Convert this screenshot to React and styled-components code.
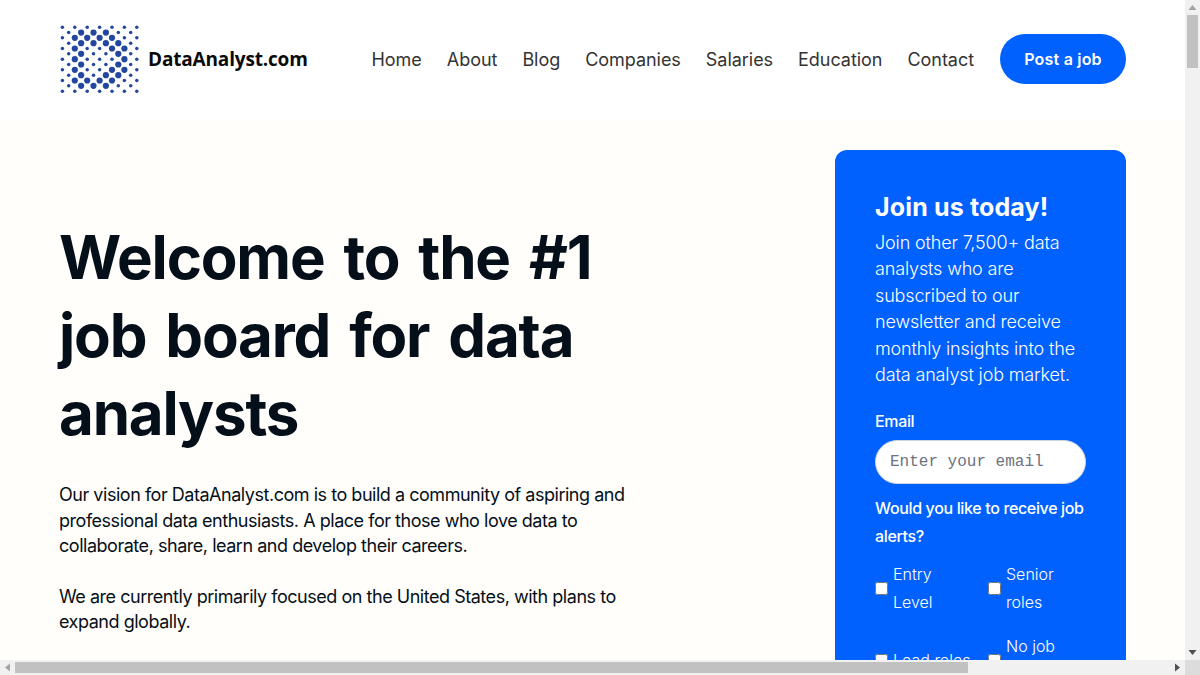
import styled, { createGlobalStyle } from 'styled-components';

const GlobalStyle = createGlobalStyle`
  html, body {
    margin: 0;
    padding: 0;
    overflow: hidden;
    background: #fffefb;
  }
  body {
    font-family: Inter, "Noto Sans", sans-serif;
    color: #050f19;
  }
  * {
    box-sizing: border-box;
  }
`;

// window: page area plus the two browser scrollbars
const Frame = styled.div`
  display: grid;
  grid-template-columns: 1185px 15px;
  grid-template-rows: 660px 15px;
  width: 1200px;
  height: 675px;
  overflow: hidden;
`;

const Viewport = styled.main`
  overflow: hidden;
`;

const ScrollY = styled.div`
  display: flex;
  flex-direction: column;
  align-items: center;
  justify-content: space-between;
  background: #f1f1f1;
`;

const ScrollX = styled.div`
  display: flex;
  align-items: center;
  justify-content: space-between;
  background: #f1f1f1;
`;

const TrackStart = styled.div`
  display: flex;
  flex-direction: ${(p) => (p.$vertical ? 'column' : 'row')};
  align-items: center;
`;

const ThumbY = styled.div`
  width: 11px;
  height: 53px;
  background: #c1c1c1;
`;

const ThumbX = styled.div`
  width: 953px;
  height: 11px;
  background: #c1c1c1;
`;

const ArrowBox = styled.span`
  display: flex;
  flex: none;
  align-items: center;
  justify-content: center;
  width: 15px;
  height: 15px;
`;

const Corner = styled.div`
  background: #dcdcdc;
`;

const Header = styled.header`
  display: flex;
  align-items: center;
  height: 121px;
  padding: 0 59px 4px 60px;
  background: #fff;
`;

const Logo = styled.a`
  display: flex;
  align-items: center;
  gap: 8px;
  margin-right: auto;
`;

const LogoText = styled.span`
  font-family: "Open Sans", sans-serif;
  font-size: 19px;
  font-weight: 700;
  color: #0a0a0a;
  letter-spacing: -0.17px;
`;

const Nav = styled.nav`
  display: flex;
  align-items: center;
  gap: 25px;
`;

const NavLink = styled.a`
  margin-top: 2px;
  font-size: 18px;
  letter-spacing: -0.04px;
  color: #333;
`;

const PostButton = styled.a`
  display: flex;
  align-items: center;
  justify-content: center;
  width: 126px;
  height: 50px;
  margin-left: 1px;
  border-radius: 25px;
  background: #0061ff;
  color: #fff;
  font-size: 16px;
  font-weight: 600;
  letter-spacing: 0.2px;
`;

const Hero = styled.section`
  display: flex;
  justify-content: space-between;
  align-items: flex-start;
  padding: 29px 59px 0 59px;
`;

const Intro = styled.div`
  width: 580px;
  padding-top: 68px;
`;

const Title = styled.h1`
  margin: 0 0 30px;
  font-size: 60px;
  font-weight: 700;
  line-height: 78px;
  letter-spacing: -1.2px;
  word-spacing: 6px;
`;

const Lead = styled.p`
  width: 570px;
  margin: 0 0 25px;
  font-size: 18px;
  line-height: 25.6px;
  letter-spacing: -0.47px;
`;

const SignupCard = styled.aside`
  width: 291px;
  padding: 36px 40px;
  border-radius: 12px;
  background: #0061ff;
  color: #fff;
`;

const CardTitle = styled.h2`
  margin: 0 0 2px;
  font-size: 25px;
  font-weight: 700;
  line-height: 42px;
  letter-spacing: 0.15px;
`;

const CardText = styled.p`
  margin: 0 0 19px;
  font-size: 18px;
  font-weight: 300;
  line-height: 26.4px;
  letter-spacing: -0.15px;
`;

const FieldLabel = styled.label`
  display: block;
  margin-bottom: 5px;
  font-size: 16px;
  font-weight: 500;
  line-height: 28px;
  letter-spacing: -0.35px;
`;

const EmailInput = styled.input`
  display: block;
  width: 100%;
  height: 44px;
  margin-bottom: 10px;
  padding: 0 14px;
  border: 1px solid #cbd5e1;
  border-radius: 22px;
  background: #fff;
  font-family: "Liberation Mono", monospace;
  font-size: 16px;
  &::placeholder {
    color: #6b7280;
  }
`;

const AlertOptions = styled.div`
  display: grid;
  grid-template-columns: 113px 98px;
  row-gap: 16px;
  margin-top: 10px;
`;

const Option = styled.label`
  display: flex;
  align-items: center;
  gap: 5px;
  padding-right: 17px;
  font-size: 16px;
  font-weight: 300;
  line-height: 28px;
`;

const Box = styled.input`
  flex: none;
  width: 13px;
  height: 13px;
  margin: 0;
`;

// halftone grid of the logo: s = small dot, B = big dot, row by row
const dotRows = [
  'sssssss',
  'sBBBss',
  'sBBBBss',
  'sBBBBs',
  'sBssBBs',
  'sBssBs',
  'sBsssBs',
  'sBssBs',
  'sBssBBs',
  'sBsBBs',
  'sBBBBss',
  'sBBBss',
  'sssssss',
];

const LogoMark = () => (
  <svg width="80" height="70" viewBox="0 0 80 70">
    {dotRows.map((row, r) =>
      [...row].map((size, c) => (
        <circle
          key={`${r}-${c}`}
          cx={(row.length === 7 ? 2.4 : 8.7) + c * 12.4}
          cy={3.2 + r * 5.33}
          r={size === 'B' ? 3.1 : 1.75}
          fill="#23479f"
        />
      ))
    )}
  </svg>
);

const arrowPoints = {
  up: '7.5,5 3.5,10 11.5,10',
  down: '7.5,10 3.5,5 11.5,5',
  left: '5,7.5 10,3.5 10,11.5',
  right: '10,7.5 5,3.5 5,11.5',
};

const Arrow = ({ dir, muted }) => (
  <ArrowBox>
    <svg width="15" height="15" viewBox="0 0 15 15">
      <polygon points={arrowPoints[dir]} fill={muted ? '#a3a3a3' : '#505050'} />
    </svg>
  </ArrowBox>
);

const links = ['Home', 'About', 'Blog', 'Companies', 'Salaries', 'Education', 'Contact'];

const App = () => (
  <Frame>
    <GlobalStyle />
    <Viewport>
      <Header>
        <Logo>
          <LogoMark />
          <LogoText>DataAnalyst.com</LogoText>
        </Logo>
        <Nav>
          {links.map((link) => (
            <NavLink key={link}>{link}</NavLink>
          ))}
          <PostButton>Post a job</PostButton>
        </Nav>
      </Header>
      <Hero>
        <Intro>
          <Title>Welcome to the #1 job board for data analysts</Title>
          <Lead>
            Our vision for DataAnalyst.com is to build a community of aspiring and professional data
            enthusiasts. A place for those who love data to collaborate, share, learn and develop
            their careers.
          </Lead>
          <Lead>
            We are currently primarily focused on the United States, with plans to expand globally.
          </Lead>
        </Intro>
        <SignupCard>
          <CardTitle>Join us today!</CardTitle>
          <CardText>
            Join other 7,500+ data analysts who are subscribed to our newsletter and receive monthly
            insights into the data analyst job market.
          </CardText>
          <FieldLabel>Email</FieldLabel>
          <EmailInput placeholder="Enter your email" />
          <FieldLabel>Would you like to receive job alerts?</FieldLabel>
          <AlertOptions>
            <Option><Box type="checkbox" />Entry Level</Option>
            <Option><Box type="checkbox" />Senior roles</Option>
            <Option><Box type="checkbox" />Lead roles</Option>
            <Option><Box type="checkbox" />No job alerts</Option>
          </AlertOptions>
        </SignupCard>
      </Hero>
    </Viewport>
    <ScrollY>
      <TrackStart $vertical>
        <Arrow dir="up" muted />
        <ThumbY />
      </TrackStart>
      <Arrow dir="down" />
    </ScrollY>
    <ScrollX>
      <TrackStart>
        <Arrow dir="left" muted />
        <ThumbX />
      </TrackStart>
      <Arrow dir="right" />
    </ScrollX>
    <Corner />
  </Frame>
);

export default App;
